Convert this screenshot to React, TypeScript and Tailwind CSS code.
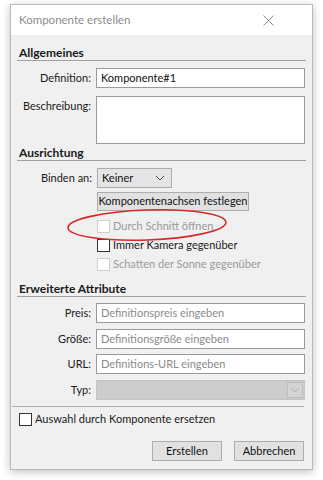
import React from "react";

const font = { fontFamily: "Lato, 'Noto Sans', sans-serif" };

function Section({ title, pt }: { title: string; pt: string }) {
  return (
    <div className={`${pt} mx-[6px] border-b border-[#a0a0a0]`}>
      <div className="pl-[2px] text-[12px] leading-[14px] font-bold text-[#1a1a1a]">{title}</div>
    </div>
  );
}

function Field({ label, value, placeholder, mt }: { label: string; value?: string; placeholder?: string; mt: string }) {
  return (
    <div className={`${mt} flex items-center ml-[6px]`}>
      <div className="w-[75px] text-right text-[11px] text-[#1a1a1a] pr-[1px] whitespace-nowrap">{label}</div>
      <div className="ml-[4px] w-[209px] h-[20px] bg-white border border-[#9a9a9a] flex items-center px-[4px] text-[11px] whitespace-nowrap">
        {value ? <span className="text-[#111]">{value}</span> : <span className="text-[#8a8a8a]">{placeholder}</span>}
      </div>
    </div>
  );
}

function Check({ label, disabled, mt }: { label: string; disabled?: boolean; mt?: string }) {
  return (
    <div className={`${mt ?? ""} h-[19px] flex items-center ml-[86px]`}>
      <div
        className={`w-[13px] h-[13px] bg-white border ${disabled ? "border-[#cfcfcf]" : "border-[#333]"}`}
      />
      <span className={`ml-[3px] text-[11px] whitespace-nowrap ${disabled ? "text-[#9a9a9a]" : "text-[#1a1a1a]"}`}>{label}</span>
    </div>
  );
}

function Chevron({ color }: { color: string }) {
  return (
    <svg width="10" height="6" viewBox="0 0 10 6">
      <path d="M1 1l4 4 4-4" fill="none" stroke={color} strokeWidth="1" />
    </svg>
  );
}

export default function App() {
  return (
    <div className="relative w-[323px] h-[480px] bg-white pt-[4px] pl-[10px]" style={font}>
      <div className="w-[303px] h-[466px] border border-[#b9b9b9] shadow-[0_2px_8px_rgba(0,0,0,0.25)] flex flex-col bg-[#f0f0f0]">
        <div className="h-[30px] bg-white flex items-center justify-between pl-[8px] pr-[38px]">
          <span className="text-[11.5px] text-[#8c8c8c]">Komponente erstellen</span>
          <svg width="11" height="11" viewBox="0 0 11 11">
            <path d="M0.5 0.5l10 10M10.5 0.5l-10 10" stroke="#8a8a8a" strokeWidth="1" />
          </svg>
        </div>

        <Section title="Allgemeines" pt="pt-[11px]" />
        <Field label="Definition:" value="Komponente#1" mt="mt-[7px]" />
        <div className="mt-[8px] flex ml-[6px]">
          <div className="w-[75px] text-right text-[11px] text-[#1a1a1a] pr-[1px] pt-[2px]">Beschreibung:</div>
          <div className="ml-[4px] w-[209px] h-[48px] bg-white border border-[#9a9a9a]" />
        </div>

        <Section title="Ausrichtung" pt="pt-[2px]" />
        <div className="mt-[7px] flex items-center ml-[6px]">
          <div className="w-[75px] text-right text-[11px] text-[#1a1a1a]">Binden an:</div>
          <div className="ml-[5px] w-[75px] h-[20px] bg-[#e5e5e5] border border-[#acacac] flex items-center justify-between pl-[4px] pr-[6px] text-[11px] text-[#111]">
            <span>Keiner</span>
            <Chevron color="#555" />
          </div>
        </div>
        <div className="mt-[4px] ml-[86px] w-[152px] h-[19px] bg-[#e1e1e1] border border-[#adadad] flex items-center justify-center text-[11px] text-[#111] whitespace-nowrap">
          Komponentenachsen festlegen
        </div>
        <Check label="Durch Schnitt öffnen" disabled mt="mt-[6px]" />
        <Check label="Immer Kamera gegenüber" />
        <Check label="Schatten der Sonne gegenüber" disabled />

        <Section title="Erweiterte Attribute" pt="pt-[8px]" />
        <Field label="Preis:" placeholder="Definitionspreis eingeben" mt="mt-[6px]" />
        <Field label="Größe:" placeholder="Definitionsgröße eingeben" mt="mt-[6px]" />
        <Field label="URL:" placeholder="Definitions-URL eingeben" mt="mt-[5px]" />
        <div className="mt-[6px] flex items-center ml-[6px]">
          <div className="w-[75px] text-right text-[11px] text-[#1a1a1a] pr-[1px]">Typ:</div>
          <div className="ml-[4px] w-[209px] h-[20px] bg-[#cccccc] border border-[#c4c4c4] flex items-center justify-end pr-[1px]">
            <div className="w-[16px] h-[16px] border border-[#bdbdbd] bg-[#d4d4d4] flex items-center justify-center">
              <Chevron color="#b0b0b0" />
            </div>
          </div>
        </div>

        <div className="mt-[6px] mx-[1px] w-[292px] border-b border-[#b0b0b0]" />
        <div className="mt-[6px] h-[13px] flex items-center ml-[8px]">
          <div className="w-[13px] h-[13px] bg-white border border-[#333]" />
          <span className="ml-[3px] text-[11px] text-[#1a1a1a] whitespace-nowrap">Auswahl durch Komponente ersetzen</span>
        </div>

        <div className="mt-[15px] flex justify-end gap-[12px] pr-[8px]">
          <div className="w-[70px] h-[20px] bg-[#e1e1e1] border border-[#adadad] flex items-center justify-center text-[11px] text-[#111]">
            Erstellen
          </div>
          <div className="w-[70px] h-[20px] bg-[#e1e1e1] border border-[#adadad] flex items-center justify-center text-[11px] text-[#111]">
            Abbrechen
          </div>
        </div>
      </div>

      <svg className="absolute left-0 top-0 pointer-events-none" width="323" height="480">
        <ellipse cx="147" cy="225" rx="79" ry="15" transform="rotate(-2 147 225)" fill="none" stroke="#d42a2a" strokeWidth="1.6" />
      </svg>
    </div>
  );
}
